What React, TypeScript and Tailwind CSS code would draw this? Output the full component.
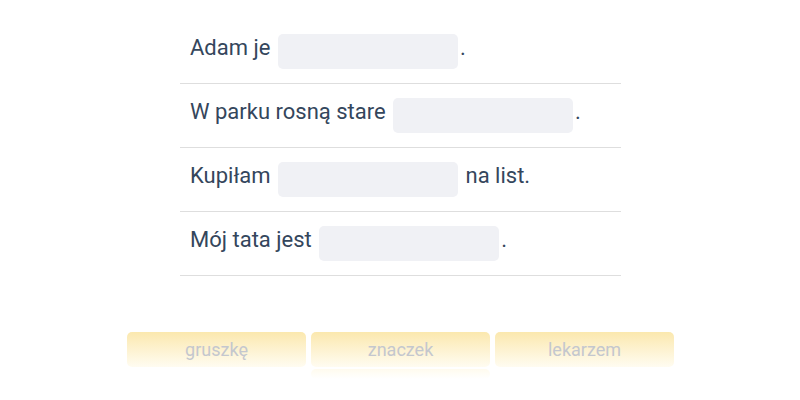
import React from "react";

const rows: { before: string; after: string }[] = [
  { before: "Adam je", after: "." },
  { before: "W parku rosną stare", after: "." },
  { before: "Kupiłam", after: "na list." },
  { before: "Mój tata jest", after: "." },
];

const words = ["gruszkę", "znaczek", "lekarzem"];

export default function App() {
  return (
    <div
      className="w-[800px] h-[400px] bg-white overflow-hidden"
      style={{ fontFamily: "Roboto, 'Noto Sans', sans-serif" }}
    >
      <div className="w-[441px] ml-[180px] pt-[20px]">
        {rows.map((r, i) => (
          <div
            key={i}
            className="h-16 border-b border-[#dedede] flex items-center pl-[10px] text-[22px] text-[#34465c] whitespace-pre"
          >
            <span className="mb-[8px]">{r.before + " "}</span>
            <span className="inline-block w-[180px] h-[35px] rounded-[5px] bg-[#f0f1f5] mx-[2px]" />
            <span className="mb-[8px]">{(r.after === "." ? "" : " ") + r.after}</span>
          </div>
        ))}
      </div>
      <div className="flex justify-center gap-[5px] mt-[56px] pl-[1px]">
        {words.map((w, i) => (
          <div key={w} className="flex flex-col">
            <div className="w-[179px] h-[35px] rounded-[5px] bg-gradient-to-b from-[#fbe8ae] to-[#fffcf1] flex items-center justify-center text-[18px] text-[#c4c7ce]">
              {w}
            </div>
            {i === 1 && (
              <div className="w-[179px] h-[10px] mt-[2px] rounded-[5px] bg-gradient-to-b from-[#fffbee] to-white" />
            )}
          </div>
        ))}
      </div>
    </div>
  );
}
